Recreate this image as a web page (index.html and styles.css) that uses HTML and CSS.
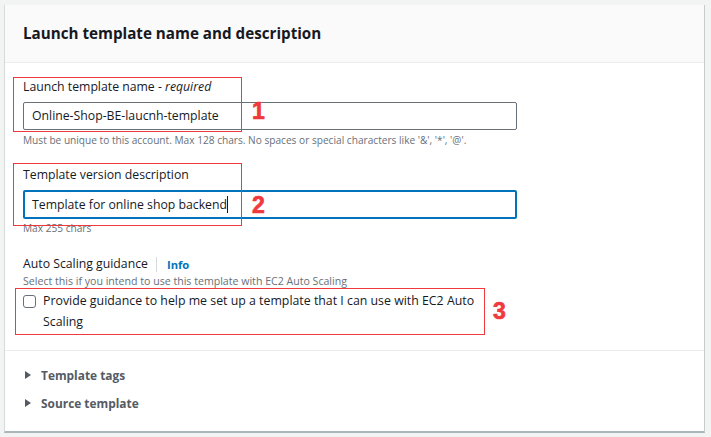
FILE: index.html
```html
<!DOCTYPE html>
<html>
<head>
<meta charset="utf-8">
<link rel="stylesheet" href="styles.css">
</head>
<body>
<div class="card">
  <div class="card-header">
    <h2>Launch template name and description</h2>
  </div>
  <div class="card-body">
    <div class="field">
      <label class="label">Launch template name - <i>required</i></label>
      <div class="input">Online-Shop-BE-laucnh-template</div>
      <div class="hint">Must be unique to this account. Max 128 chars. No spaces or special characters like '&amp;', '*', '@'.</div>
    </div>
    <div class="field field-2">
      <label class="label">Template version description</label>
      <div class="input input-focus">Template for online shop backend<span class="caret"></span></div>
      <div class="hint">Max 255 chars</div>
    </div>
    <div class="field field-3">
      <div class="label-row">
        <span class="label">Auto Scaling guidance</span>
        <span class="divider"></span>
        <span class="info">Info</span>
      </div>
      <div class="hint hint-wide">Select this if you intend to use this template with EC2 Auto Scaling</div>
      <div class="check-row">
        <span class="checkbox"></span>
        <span class="check-text">Provide guidance to help me set up a template that I can use with EC2 Auto Scaling</span>
      </div>
    </div>
  </div>
  <div class="card-footer">
    <div class="expander"><span class="tri"></span>Template tags</div>
    <div class="expander"><span class="tri"></span>Source template</div>
  </div>

  <div class="annot annot-1"></div>
  <div class="annot annot-2"></div>
  <div class="annot annot-3"></div>
  <span class="num num-1">1</span>
  <span class="num num-2">2</span>
  <span class="num num-3">3</span>
</div>
</body>
</html>
```
FILE: styles.css
```css
html, body {
  margin: 0;
  padding: 0;
  background: #f2f3f3;
}
body {
  font-family: "Open Sans", "Noto Sans", sans-serif;
  color: #16191f;
  padding: 5px 6px 0 4px;
  width: 711px;
  height: 437px;
  box-sizing: border-box;
  overflow: hidden;
}
.card {
  position: relative;
  background: #fff;
  border-left: 1px solid #d5dbdb;
  border-right: 1px solid #c6cccc;
  border-bottom: 2px solid #aab7b8;
  height: 428px;
  box-sizing: border-box;
}
.card-header {
  background: #fafafa;
  border-bottom: 1px solid #eaeded;
  height: 58px;
  box-sizing: border-box;
  display: flex;
  align-items: center;
  padding-left: 18px;
}
.card-header h2 {
  margin: 0;
  font-size: 15.2px;
  font-weight: 700;
  color: #16191f;
  padding-bottom: 2px;
}
.card-body {
  padding: 15px 0 18px 18px;
  border-bottom: 1px solid #eaeded;
}
.label {
  display: block;
  font-size: 12.25px;
  line-height: 18px;
  color: #16191f;
}
.label i {
  font-style: italic;
}
.input {
  width: 494px;
  height: 28px;
  box-sizing: border-box;
  border: 1px solid #687078;
  border-radius: 2px;
  font-size: 12.25px;
  line-height: 26px;
  padding-left: 8px;
  margin-top: 6px;
  background: #fff;
}
.input-focus {
  border: 2px solid #0073bb;
  line-height: 25px;
  padding-left: 7px;
  height: 29px;
}
.caret {
  display: inline-block;
  width: 1px;
  height: 17px;
  background: #16191f;
  vertical-align: -4px;
}
.hint {
  font-size: 10.15px;
  color: #687078;
  line-height: 14px;
  margin-top: 3px;
}
.hint-wide {
  font-size: 10.6px;
}
.field-2 {
  margin-top: 19px;
}
.field-2 .hint {
  margin-top: 2px;
}
.field-3 {
  margin-top: 19px;
}
.field-3 .hint {
  margin-top: 0;
}
.label-row {
  display: flex;
  align-items: center;
  height: 20px;
}
.label-row .label {
  display: inline;
}
.divider {
  display: inline-block;
  width: 1px;
  height: 15px;
  background: #d5dbdb;
  margin: 0 10px 0 8px;
}
.info {
  color: #0073bb;
  font-weight: 700;
  font-size: 11.2px;
}
.check-row {
  display: flex;
  align-items: flex-start;
  margin-top: 2px;
  width: 455px;
}
.checkbox {
  width: 13px;
  height: 13px;
  box-sizing: border-box;
  border: 1px solid #687078;
  border-radius: 3px;
  margin-top: 5px;
  flex: none;
}
.check-text {
  font-size: 12.35px;
  line-height: 21px;
  margin-left: 7px;
}
.card-footer {
  padding: 10px 0 0 20px;
}
.expander {
  display: flex;
  align-items: center;
  font-size: 11.9px;
  font-weight: 700;
  color: #545b64;
  height: 28px;
}
.tri {
  width: 0;
  height: 0;
  border-left: 6px solid #545b64;
  border-top: 4.5px solid transparent;
  border-bottom: 4.5px solid transparent;
  margin-right: 10px;
}

/* annotation overlays */
.annot {
  position: absolute;
  border: 1px solid #f0393d;
  box-sizing: border-box;
  pointer-events: none;
}
.annot-1 {
  left: 8px;
  top: 72px;
  width: 229px;
  height: 55px;
}
.annot-2 {
  left: 8px;
  top: 158px;
  width: 229px;
  height: 63px;
}
.annot-3 {
  left: 10px;
  top: 283px;
  width: 470px;
  height: 47px;
}
.num {
  position: absolute;
  color: #f0393d;
  font-family: "Liberation Sans", Arial, sans-serif;
  font-weight: 700;
  font-size: 23px;
  line-height: 23px;
  -webkit-text-stroke: 0.7px #f0393d;
}
.num-1 {
  left: 247px;
  top: 95px;
}
.num-2 {
  left: 247px;
  top: 189px;
}
.num-3 {
  left: 488px;
  top: 295px;
}
```
